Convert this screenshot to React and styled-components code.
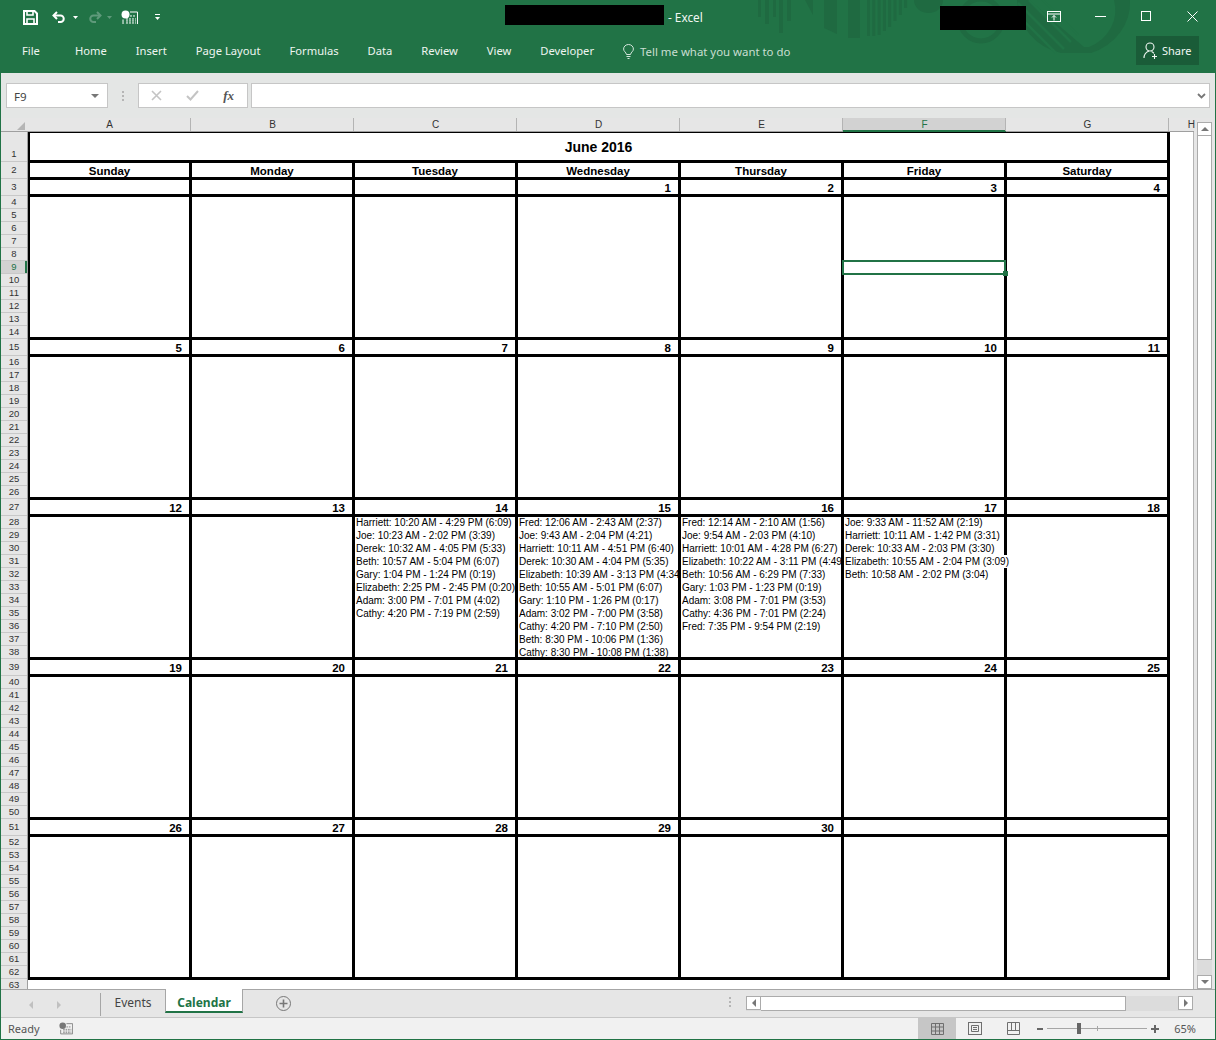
import React from "react";
import styled, { createGlobalStyle } from "styled-components";

const GREEN = "#217346";
const UI_FONT = '"Noto Sans", "Open Sans", sans-serif';
const SHEET_FONT = '"Liberation Sans", Arial, sans-serif';

const GlobalStyle = createGlobalStyle`
  html, body {
    margin: 0;
    padding: 0;
    background: #e6e6e6;
  }
  * {
    box-sizing: border-box;
  }
`;

const Window = styled.div`
  width: 1216px;
  height: 1040px;
  display: flex;
  flex-direction: column;
  overflow: hidden;
  border: 1px solid ${GREEN};
  border-top: none;
  font-family: ${UI_FONT};
`;

/* title bar */
const TitleBar = styled.header`
  position: relative;
  height: 73px;
  flex: none;
  background: ${GREEN};
  color: #fff;
`;
const Pattern = styled.svg`
  position: absolute;
  left: 749px;
  top: 0;
`;
const TitleRow = styled.div`
  position: relative;
  height: 34px;
  display: flex;
  align-items: flex-start;
`;
const QuickAccess = styled.div`
  width: 504px;
  height: 34px;
  flex: none;
  display: flex;
  align-items: center;
  padding-left: 22px;
`;
const Redacted = styled.div`
  background: #000;
  flex: none;
  width: ${(p) => p.$w}px;
  height: ${(p) => p.$h}px;
  margin-top: ${(p) => p.$top}px;
  margin-right: ${(p) => p.$mr || 0}px;
`;
const DocTitle = styled.div`
  margin: 9px 0 0 4px;
  font-size: 11.8px;
  line-height: 16px;
  color: #f1f7f3;
`;
const WindowControls = styled.div`
  margin-left: auto;
  display: flex;
  align-items: flex-start;
`;
const WinButton = styled.div`
  width: 46px;
  height: 32px;
  display: flex;
  align-items: center;
  justify-content: center;
`;
const QaIcon = styled.svg`
  flex: none;
  margin-left: ${(p) => p.$ml || 0}px;
`;
const TabRow = styled.nav`
  position: relative;
  height: 39px;
  display: flex;
  align-items: flex-start;
  padding: 2px 0 0 21px;
  gap: 29px;
  font-size: 11.2px;
`;
const RibbonTab = styled.div`
  line-height: 30px;
  color: #eef5f0;
  margin-right: ${(p) => p.$mr || 0}px;
`;
const TellMe = styled.div`
  display: flex;
  align-items: center;
  gap: 6px;
  height: 30px;
  font-size: 11.4px;
  color: #c9dfd2;
`;
const ShareButton = styled.div`
  position: absolute;
  left: 1135px;
  top: 2px;
  width: 63px;
  height: 29px;
  background: #1a5c38;
  display: flex;
  align-items: center;
  gap: 3px;
  padding-left: 7px;
  font-size: 11px;
  color: #f1f7f3;
`;

/* formula bar */
const FormulaBar = styled.div`
  height: 45px;
  flex: none;
  display: flex;
  padding: 10px 5px 10px 5px;
  background: #e4e6e5;
`;
const FieldBox = styled.div`
  height: 25px;
  flex: none;
  background: #fff;
  border: 1px solid #c6c6c6;
  display: flex;
  align-items: center;
`;
const NameBox = styled(FieldBox)`
  width: 102px;
  padding: 1px 8px 0 7px;
  justify-content: space-between;
  font-size: 11.5px;
  color: #444;
`;
const Caret = styled.span`
  width: 0;
  height: 0;
  border-left: 4px solid transparent;
  border-right: 4px solid transparent;
  border-top: 4px solid #777;
`;
const GripDots = styled.div`
  width: 30px;
  flex: none;
  display: flex;
  align-items: center;
  justify-content: center;
`;
const Grip = styled.span`
  width: 2px;
  height: 10px;
  background: repeating-linear-gradient(#b5b5b5 0 2px, transparent 2px 4px);
`;
const FxBox = styled(FieldBox)`
  width: 110px;
  justify-content: space-between;
  padding: 0 13px 0 12px;
  margin-right: 3px;
`;
const FxLabel = styled.span`
  font-family: "Liberation Serif", serif;
  font-style: italic;
  font-weight: bold;
  font-size: 13px;
  color: #555;
`;
const FormulaInput = styled(FieldBox)`
  width: 959px;
  justify-content: flex-end;
  padding-right: 3px;
`;

/* sheet */
const SheetArea = styled.div`
  height: 871px;
  flex: none;
  display: flex;
  background: #e6e6e6;
`;
const SheetMain = styled.div`
  width: 1193px;
  flex: none;
  display: flex;
  flex-direction: column;
`;
const ColHeaderRow = styled.div`
  height: 14px;
  flex: none;
  display: flex;
  border-bottom: 1px solid #9f9f9f;
  font-family: ${SHEET_FONT};
  font-size: 10px;
  color: #333;
`;
const SelectAll = styled.div`
  width: 27px;
  flex: none;
  display: flex;
  align-items: flex-end;
  justify-content: flex-end;
  padding: 0 3px 1px 0;
`;
const ColHead = styled.div`
  flex: none;
  width: ${(p) => p.$w}px;
  line-height: 13px;
  text-align: ${(p) => (p.$edge ? "right" : "center")};
  padding-left: ${(p) => (p.$edge ? 0 : 1)}px;
  border-right: ${(p) => (p.$edge ? "none" : "1px solid #b4b4b4")};
  background: ${(p) => (p.$active ? "#d2d2d2" : "transparent")};
  color: ${(p) => (p.$active ? GREEN : "#333")};
  box-shadow: ${(p) => (p.$active ? `inset 0 -1px 0 ${GREEN}, 0 1px 0 ${GREEN}` : "none")};
`;
const SheetBody = styled.div`
  flex: 1;
  min-height: 0;
  display: flex;
`;
const RowHeaders = styled.div`
  width: 27px;
  flex: none;
  overflow: hidden;
  border-right: 1px solid #9f9f9f;
  font-family: ${SHEET_FONT};
  font-size: 9.5px;
  color: #333;
`;
const RowHead = styled.div`
  height: ${(p) => p.$h}px;
  display: flex;
  align-items: flex-end;
  justify-content: center;
  line-height: ${(p) => (p.$h > 20 ? 14 : p.$h - 1)}px;
  border-bottom: 1px solid #c8c8c8;
  background: ${(p) => (p.$active ? "#d2d2d2" : "transparent")};
  color: ${(p) => (p.$active ? GREEN : "#333")};
  box-shadow: ${(p) => (p.$active ? `inset -2px 0 0 ${GREEN}` : "none")};
`;
const Canvas = styled.div`
  flex: 1;
  min-width: 0;
  background: #fff;
  border-right: 1px solid #b4b4b4;
  font-family: ${SHEET_FONT};
  color: #000;
`;
const Calendar = styled.div`
  width: 1142px;
  border-left: 2px solid #000;
  border-top: 1px solid #000;
`;
const MonthTitle = styled.div`
  height: 30px;
  border-right: 3px solid #000;
  border-bottom: 3px solid #000;
  text-align: center;
  font-size: 14px;
  font-weight: bold;
  line-height: 29px;
`;
const WeekGrid = styled.div`
  display: grid;
  grid-template-columns: 162px repeat(6, 163px);
`;
const DayName = styled.div`
  height: 17px;
  border-right: 3px solid #000;
  border-bottom: 3px solid #000;
  text-align: center;
  font-size: 11.5px;
  font-weight: bold;
  line-height: 16px;
`;
const DateCell = styled.div`
  height: 17px;
  border-right: 3px solid #000;
  border-bottom: 3px solid #000;
  padding-right: 7px;
  text-align: right;
  font-size: 11.5px;
  font-weight: bold;
  line-height: 16px;
`;
const BodyCell = styled.div`
  position: relative;
  height: 143px;
  border-right: 3px solid #000;
  border-bottom: 3px solid #000;
  padding-left: 1px;
  overflow: ${(p) => (p.$spill ? "visible" : "hidden")};
`;
const EntryList = styled.div`
  margin-top: -1px;
`;
const Entry = styled.div`
  width: max-content;
  height: 13px;
  padding-right: 1px;
  white-space: nowrap;
  font-size: 10px;
  line-height: 13px;
  background: ${(p) => (p.$spill ? "#fff" : "transparent")};
`;
const Selection = styled.div`
  position: absolute;
  left: -2px;
  top: 63px;
  width: 164px;
  height: 15px;
  border: 2px solid ${GREEN};
`;
const SelectionHandle = styled.span`
  position: absolute;
  right: -4px;
  bottom: -3px;
  width: 5px;
  height: 5px;
  background: ${GREEN};
`;

/* vertical scrollbar */
const VScroll = styled.div`
  width: 21px;
  flex: none;
  display: flex;
  flex-direction: column;
  padding: 4px 3px 0 3px;
`;
const ScrollButton = styled.div`
  width: 15px;
  height: 14px;
  flex: none;
  display: flex;
  align-items: center;
  justify-content: center;
  background: #fff;
  border: 1px solid #ababab;
`;
const VTrack = styled.div`
  flex: 1;
  min-height: 0;
  background: #dcdcdc;
  padding-bottom: 15px;
`;
const VThumb = styled.div`
  width: 15px;
  height: 100%;
  background: #fff;
  border: 1px solid #ababab;
  border-top: none;
`;
const Arrow = styled.span`
  width: 0;
  height: 0;
  border-left: ${(p) => (p.$dir === "right" ? "4px solid #777" : p.$dir === "left" ? "none" : "4px solid transparent")};
  border-right: ${(p) => (p.$dir === "left" ? "4px solid #777" : p.$dir === "right" ? "none" : "4px solid transparent")};
  border-top: ${(p) => (p.$dir === "down" ? "4px solid #777" : p.$dir === "up" ? "none" : "4px solid transparent")};
  border-bottom: ${(p) => (p.$dir === "up" ? "4px solid #777" : p.$dir === "down" ? "none" : "4px solid transparent")};
  opacity: ${(p) => (p.$dim ? 0.35 : 1)};
`;

/* sheet tabs */
const TabBar = styled.div`
  height: 28px;
  flex: none;
  display: flex;
  align-items: flex-start;
  background: #e6e6e6;
  border-top: 1px solid #a6a6a6;
  font-size: 12px;
`;
const TabNav = styled.div`
  width: 100px;
  height: 23px;
  flex: none;
  display: flex;
  align-items: center;
  gap: 24px;
  padding-left: 28px;
  border-right: 1px solid #a6a6a6;
  margin-top: 3px;
`;
const SheetTab = styled.div`
  height: ${(p) => (p.$active ? 24 : 26)}px;
  width: ${(p) => p.$w}px;
  flex: none;
  text-align: center;
  line-height: ${(p) => (p.$active ? 27 : 25)}px;
  color: ${(p) => (p.$active ? GREEN : "#444")};
  font-weight: ${(p) => (p.$active ? "bold" : "normal")};
  background: ${(p) => (p.$active ? "#fff" : "transparent")};
  border-left: ${(p) => (p.$active ? "1px solid #a6a6a6" : "none")};
  border-right: ${(p) => (p.$active ? "1px solid #a6a6a6" : "none")};
  border-bottom: ${(p) => (p.$active ? `2px solid ${GREEN}` : "none")};
  margin-top: ${(p) => (p.$active ? -1 : 0)}px;
`;
const AddSheet = styled.svg`
  margin: 6px 0 0 33px;
  flex: none;
`;
const TabDots = styled.div`
  margin: 7px 0 0 auto;
  width: 2px;
  height: 11px;
  flex: none;
  background: repeating-linear-gradient(#b5b5b5 0 2px, transparent 2px 4px);
`;
const HScroll = styled.div`
  width: 447px;
  height: 15px;
  flex: none;
  display: flex;
  margin: 6px 22px 0 15px;
  background: #dcdcdc;
`;
const HThumb = styled.div`
  width: 365px;
  flex: none;
  background: #fff;
  border: 1px solid #ababab;
  border-left: none;
  margin-right: auto;
`;

/* status bar */
const StatusBar = styled.footer`
  height: 22px;
  flex: none;
  display: flex;
  align-items: center;
  background: #f1f1f1;
  border-top: 1px solid #c6c6c6;
  font-size: 11px;
  color: #555;
`;
const StatusText = styled.span`
  margin-left: ${(p) => p.$ml || 0}px;
  margin-right: ${(p) => p.$mr || 0}px;
`;
const StatusSpacer = styled.div`
  flex: 1;
`;
const ViewButton = styled.div`
  width: 38px;
  height: 21px;
  flex: none;
  display: flex;
  align-items: center;
  justify-content: center;
  background: ${(p) => (p.$active ? "#c6c6c6" : "transparent")};
`;
const ZoomBlock = styled.div`
  display: flex;
  align-items: center;
  margin-left: 5px;
`;
const ZoomSign = styled.svg`
  flex: none;
`;
const ZoomTrack = styled.div`
  position: relative;
  width: 100px;
  height: 1px;
  margin: 0 4px;
  background: #a6a6a6;
`;
const ZoomTick = styled.span`
  position: absolute;
  left: 50px;
  top: -2px;
  width: 1px;
  height: 5px;
  background: #a6a6a6;
`;
const ZoomThumb = styled.span`
  position: absolute;
  left: 30px;
  top: -5px;
  width: 4px;
  height: 11px;
  background: #666;
`;

/* data */
const ROW_HEIGHTS = [30, 17, 17];
for (let w = 0; w < 5; w++) {
  for (let i = 0; i < 11; i++) ROW_HEIGHTS.push(13);
  if (w < 4) ROW_HEIGHTS.push(17);
}
ROW_HEIGHTS.push(13);

const COLUMNS = ["A", "B", "C", "D", "E", "F", "G"];
const DAY_NAMES = ["Sunday", "Monday", "Tuesday", "Wednesday", "Thursday", "Friday", "Saturday"];
const WEEKS = [
  ["", "", "", 1, 2, 3, 4],
  [5, 6, 7, 8, 9, 10, 11],
  [12, 13, 14, 15, 16, 17, 18],
  [19, 20, 21, 22, 23, 24, 25],
  [26, 27, 28, 29, 30, "", ""],
];
const ENTRIES = {
  14: [
    "Harriett: 10:20 AM - 4:29 PM (6:09)",
    "Joe: 10:23 AM - 2:02 PM (3:39)",
    "Derek: 10:32 AM - 4:05 PM (5:33)",
    "Beth: 10:57 AM - 5:04 PM (6:07)",
    "Gary: 1:04 PM - 1:24 PM (0:19)",
    "Elizabeth: 2:25 PM - 2:45 PM (0:20)",
    "Adam: 3:00 PM - 7:01 PM (4:02)",
    "Cathy: 4:20 PM - 7:19 PM (2:59)",
  ],
  15: [
    "Fred: 12:06 AM - 2:43 AM (2:37)",
    "Joe: 9:43 AM - 2:04 PM (4:21)",
    "Harriett: 10:11 AM - 4:51 PM (6:40)",
    "Derek: 10:30 AM - 4:04 PM (5:35)",
    "Elizabeth: 10:39 AM - 3:13 PM (4:34)",
    "Beth: 10:55 AM - 5:01 PM (6:07)",
    "Gary: 1:10 PM - 1:26 PM (0:17)",
    "Adam: 3:02 PM - 7:00 PM (3:58)",
    "Cathy: 4:20 PM - 7:10 PM (2:50)",
    "Beth: 8:30 PM - 10:06 PM (1:36)",
    "Cathy: 8:30 PM - 10:08 PM (1:38)",
  ],
  16: [
    "Fred: 12:14 AM - 2:10 AM (1:56)",
    "Joe: 9:54 AM - 2:03 PM (4:10)",
    "Harriett: 10:01 AM - 4:28 PM (6:27)",
    "Elizabeth: 10:22 AM - 3:11 PM (4:49)",
    "Beth: 10:56 AM - 6:29 PM (7:33)",
    "Gary: 1:03 PM - 1:23 PM (0:19)",
    "Adam: 3:08 PM - 7:01 PM (3:53)",
    "Cathy: 4:36 PM - 7:01 PM (2:24)",
    "Fred: 7:35 PM - 9:54 PM (2:19)",
  ],
  17: [
    "Joe: 9:33 AM - 11:52 AM (2:19)",
    "Harriett: 10:11 AM - 1:42 PM (3:31)",
    "Derek: 10:33 AM - 2:03 PM (3:30)",
    "Elizabeth: 10:55 AM - 2:04 PM (3:09)",
    "Beth: 10:58 AM - 2:02 PM (3:04)",
  ],
};
const RIBBON_TABS = ["Home", "Insert", "Page Layout", "Formulas", "Data", "Review", "View", "Developer"];

const TitlePattern = () => (
  <Pattern width="400" height="60" viewBox="0 0 400 60" fill="#1f6a41">
    <rect x="8" y="0" width="3" height="17" />
    <rect x="15" y="0" width="4" height="24" />
    <rect x="23" y="0" width="3" height="17" />
    <rect x="29" y="0" width="4" height="33" />
    <rect x="37" y="0" width="4" height="21" />
    <polygon points="55,0 63,0 63,15" />
    <polygon points="74,0 87,0 87,34 74,28" />
    <rect x="98" y="0" width="12" height="38" />
    {[36, 36, 35, 31, 27, 21, 15, 8].map((h, i) => (
      <rect key={i} x={117 + i * 5.3} y="0" width="3" height={h} />
    ))}
    <path d="M164 0a14.5 13 0 0 0 29 0z" />
    <circle cx="231" cy="20" r="21" fill="none" stroke="#1f6a41" strokeWidth="5" />
    <path d="M267 0h12l62 53h-30a55 55 0 0 1-44-53zM364 0h16a57 53 0 0 1-39 53h-30l6-6h22a43 40 0 0 0 25-47z" />
    <g stroke={GREEN} strokeWidth="2.5">
      <path d="M268 3l46 46M279 0l42 42M290 -3l38 38M260 7l46 46" />
    </g>
  </Pattern>
);

const SaveIcon = () => (
  <QaIcon width="15" height="15" viewBox="0 0 15 15" fill="none" stroke="#fff" strokeWidth="2">
    <path d="M1 1h10.5L14 3.5V14H1z" />
    <path d="M4 1v4h6V1M4 14V9h7v5" strokeWidth="1.6" />
  </QaIcon>
);
const UndoIcon = ({ dim, flip, ml }) => (
  <QaIcon $ml={ml} width="15" height="12" viewBox="0 0 15 12" fill="none" stroke={dim ? "#5f9a7b" : "#fff"} strokeWidth="2">
    <g transform={flip ? "translate(15 0) scale(-1 1)" : undefined}>
      <path d="M5 1L1.5 4.5 5 8" />
      <path d="M2 4.5h6.5a3 3 0 0 1 0 6.5H6" />
    </g>
  </QaIcon>
);
const SmallCaret = ({ ml, color = "#fff" }) => (
  <QaIcon $ml={ml} width="5" height="3" viewBox="0 0 5 3" fill={color}>
    <path d="M0 0h5L2.5 3z" />
  </QaIcon>
);
const FormIcon = ({ color = "#fff", ml, size = 17 }) => (
  <QaIcon $ml={ml} width={size} height={size * 0.88} viewBox="0 0 17 15" fill="none">
    <circle cx="4.5" cy="4.5" r="4" fill={color} />
    <path d="M9 2h7.5v12.5H2V9.5" stroke={color} />
    <path d="M9 6h6M5 9h10M5 11h10M5 13h10" stroke={color} strokeDasharray="2 1" />
  </QaIcon>
);
const CustomizeIcon = () => (
  <QaIcon $ml={17} width="5" height="7" viewBox="0 0 5 7" fill="#fff">
    <rect x="0" y="0" width="5" height="1" />
    <path d="M0 3h5L2.5 6z" />
  </QaIcon>
);
const RibbonDisplayIcon = () => (
  <svg width="14" height="11" viewBox="0 0 14 11" fill="none" stroke="#fff">
    <rect x="0.5" y="0.5" width="13" height="10" />
    <path d="M1 3h12M7 9.5V4.5M5 6.5l2-2 2 2" />
  </svg>
);
const MinimizeIcon = () => (
  <svg width="11" height="1" viewBox="0 0 11 1">
    <rect width="11" height="1" fill="#fff" />
  </svg>
);
const MaximizeIcon = () => (
  <svg width="10" height="10" viewBox="0 0 10 10" fill="none" stroke="#fff">
    <rect x="0.5" y="0.5" width="9" height="9" />
  </svg>
);
const CloseIcon = () => (
  <svg width="11" height="11" viewBox="0 0 11 11" fill="none" stroke="#fff">
    <path d="M0.5 0.5l10 10M10.5 0.5l-10 10" />
  </svg>
);
const BulbIcon = () => (
  <svg width="11" height="15" viewBox="0 0 11 15" fill="none" stroke="#d5e6dc">
    <path d="M3.5 10.5C3 8 .6 7.5.6 5a4.9 4.5 0 0 1 9.8 0c0 2.5-2.4 3-2.9 5.5z" />
    <path d="M3.5 12.5h4M4.5 14.5h2" />
  </svg>
);
const ShareIcon = () => (
  <svg width="16" height="17" viewBox="0 0 16 17" fill="none" stroke="#f1f7f3" strokeWidth="1.1">
    <circle cx="7" cy="5" r="4" />
    <path d="M1 16c0-3.5 2.5-6 5-7M8.5 9.5c1 .4 1.8 1 2.4 1.8M11.5 12v5M9 14.5h5" />
  </svg>
);
const CrossIcon = () => (
  <svg width="11" height="11" viewBox="0 0 11 11" fill="none" stroke="#c4c4c4" strokeWidth="1.6">
    <path d="M1 1l9 9M10 1l-9 9" />
  </svg>
);
const CheckIcon = () => (
  <svg width="13" height="11" viewBox="0 0 13 11" fill="none" stroke="#c4c4c4" strokeWidth="2">
    <path d="M1 6l3.5 3.5L12 1" />
  </svg>
);
const ChevronIcon = () => (
  <svg width="9" height="6" viewBox="0 0 9 6" fill="none" stroke="#777" strokeWidth="1.8">
    <path d="M1 1l3.5 3.5L8 1" />
  </svg>
);
const NormalViewIcon = () => (
  <svg width="13" height="12" viewBox="0 0 13 12" fill="none" stroke="#6f6f6f">
    <path d="M.5.5h12v11H.5zM.5 4h12M.5 8h12M4.5.5v11M8.5.5v11" />
  </svg>
);
const PageViewIcon = () => (
  <svg width="14" height="13" viewBox="0 0 14 13" fill="none" stroke="#6f6f6f">
    <rect x="0.5" y="0.5" width="13" height="12" />
    <path d="M3.5 3.5h7v6h-7zM5 5.5h4M5 7.5h4" />
  </svg>
);
const BreakViewIcon = () => (
  <svg width="13" height="13" viewBox="0 0 13 13" fill="none" stroke="#6f6f6f">
    <path d="M.5.5h12v12H.5zM.5 8.5h12M4.5.5v8M8.5.5v8" />
  </svg>
);

const App = () => {
  return (
    <Window>
      <GlobalStyle />
      <TitleBar>
        <TitlePattern />
        <TitleRow>
          <QuickAccess>
            <SaveIcon />
            <UndoIcon ml={14} />
            <SmallCaret ml={6} />
            <UndoIcon dim flip ml={9} />
            <SmallCaret ml={5} color="#5f9a7b" />
            <FormIcon ml={9} />
            <CustomizeIcon />
          </QuickAccess>
          <Redacted $w={159} $h={20} $top={5} />
          <DocTitle>- Excel</DocTitle>
          <WindowControls>
            <Redacted $w={86} $h={24} $top={6} $mr={5} />
            <WinButton><RibbonDisplayIcon /></WinButton>
            <WinButton><MinimizeIcon /></WinButton>
            <WinButton><MaximizeIcon /></WinButton>
            <WinButton><CloseIcon /></WinButton>
          </WindowControls>
        </TitleRow>
        <TabRow>
          <RibbonTab $mr={6}>File</RibbonTab>
          {RIBBON_TABS.map((t) => (
            <RibbonTab key={t}>{t}</RibbonTab>
          ))}
          <TellMe>
            <BulbIcon />
            Tell me what you want to do
          </TellMe>
          <ShareButton>
            <ShareIcon />
            Share
          </ShareButton>
        </TabRow>
      </TitleBar>

      <FormulaBar>
        <NameBox>
          F9
          <Caret />
        </NameBox>
        <GripDots><Grip /></GripDots>
        <FxBox>
          <CrossIcon />
          <CheckIcon />
          <FxLabel>fx</FxLabel>
        </FxBox>
        <FormulaInput><ChevronIcon /></FormulaInput>
      </FormulaBar>

      <SheetArea>
        <SheetMain>
          <ColHeaderRow>
            <SelectAll>
              <svg width="8" height="8" viewBox="0 0 8 8"><path d="M8 0v8H0z" fill="#b5b5b5" /></svg>
            </SelectAll>
            {COLUMNS.map((c) => (
              <ColHead key={c} $w={163} $active={c === "F"}>{c}</ColHead>
            ))}
            <ColHead $w={26} $edge>H</ColHead>
          </ColHeaderRow>
          <SheetBody>
            <RowHeaders>
              {ROW_HEIGHTS.map((h, i) => (
                <RowHead key={i} $h={h} $active={i === 8}>{i + 1}</RowHead>
              ))}
            </RowHeaders>
            <Canvas>
              <Calendar>
                <MonthTitle>June 2016</MonthTitle>
                <WeekGrid>
                  {DAY_NAMES.map((d) => (
                    <DayName key={d}>{d}</DayName>
                  ))}
                  {WEEKS.map((week, w) => (
                    <React.Fragment key={w}>
                      {week.map((day, i) => (
                        <DateCell key={i}>{day}</DateCell>
                      ))}
                      {week.map((day, i) => {
                        const spill = day === 17;
                        return (
                          <BodyCell key={i} $spill={spill || day === 3}>
                            {ENTRIES[day] && (
                              <EntryList>
                                {ENTRIES[day].map((e) => (
                                  <Entry key={e} $spill={spill && e.startsWith("Elizabeth")}>{e}</Entry>
                                ))}
                              </EntryList>
                            )}
                            {day === 3 && (
                              <Selection>
                                <SelectionHandle />
                              </Selection>
                            )}
                          </BodyCell>
                        );
                      })}
                    </React.Fragment>
                  ))}
                </WeekGrid>
              </Calendar>
            </Canvas>
          </SheetBody>
        </SheetMain>
        <VScroll>
          <ScrollButton><Arrow $dir="up" /></ScrollButton>
          <VTrack><VThumb /></VTrack>
          <ScrollButton><Arrow $dir="down" /></ScrollButton>
        </VScroll>
      </SheetArea>

      <TabBar>
        <TabNav>
          <Arrow $dir="left" $dim />
          <Arrow $dir="right" $dim />
        </TabNav>
        <SheetTab $w={64}>Events</SheetTab>
        <SheetTab $w={78} $active>Calendar</SheetTab>
        <AddSheet width="15" height="15" viewBox="0 0 15 15" fill="none" stroke="#777">
          <circle cx="7.5" cy="7.5" r="7" />
          <path d="M7.5 3.5v8M3.5 7.5h8" strokeWidth="1.6" />
        </AddSheet>
        <TabDots />
        <HScroll>
          <ScrollButton><Arrow $dir="left" /></ScrollButton>
          <HThumb />
          <ScrollButton><Arrow $dir="right" /></ScrollButton>
        </HScroll>
      </TabBar>

      <StatusBar>
        <StatusText $ml={7}>Ready</StatusText>
        <FormIcon color="#777" ml={19} size={14} />
        <StatusSpacer />
        <ViewButton $active><NormalViewIcon /></ViewButton>
        <ViewButton><PageViewIcon /></ViewButton>
        <ViewButton><BreakViewIcon /></ViewButton>
        <ZoomBlock>
          <ZoomSign width="6" height="2" viewBox="0 0 6 2"><rect width="6" height="2" fill="#666" /></ZoomSign>
          <ZoomTrack>
            <ZoomTick />
            <ZoomThumb />
          </ZoomTrack>
          <ZoomSign width="8" height="8" viewBox="0 0 8 8"><path d="M0 3h8v2H0zM3 0h2v8H3z" fill="#666" /></ZoomSign>
        </ZoomBlock>
        <StatusText $ml={15} $mr={19}>65%</StatusText>
      </StatusBar>
    </Window>
  );
};

export default App;
